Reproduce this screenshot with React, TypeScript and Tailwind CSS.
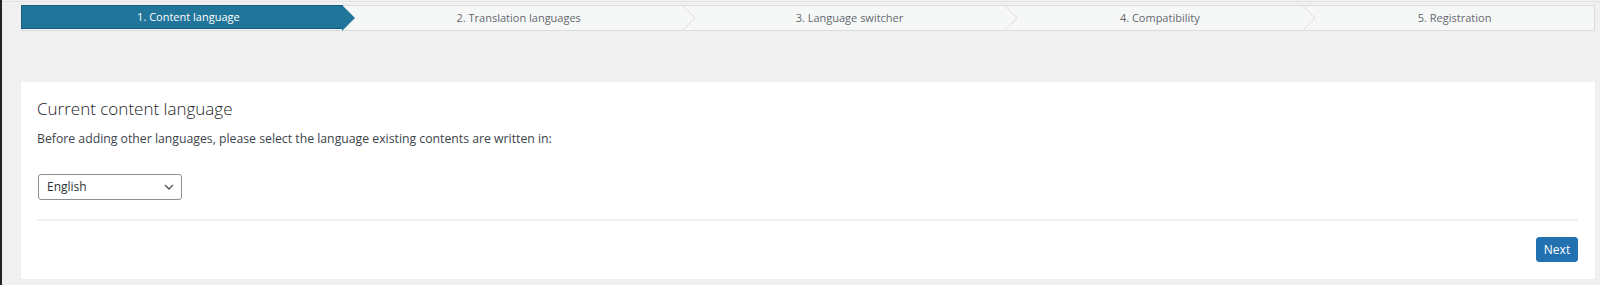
import React from "react";

const steps = [
  { label: "1. Content language", w: 322 },
  { label: "2. Translation languages", w: 339 },
  { label: "3. Language switcher", w: 323 },
  { label: "4. Compatibility", w: 298 },
  { label: "5. Registration", w: 292 },
];

export default function App() {
  return (
    <div
      className="w-[1600px] h-[285px] bg-[#f0f0f1] flex overflow-hidden"
      style={{ fontFamily: '"Open Sans", "Noto Sans", sans-serif' }}
    >
      <div className="w-[2px] h-full bg-[#1d2327] shrink-0" />
      <div className="flex-1 flex flex-col">
        <div className="h-[1px]" />
        <div className="h-[1px] bg-[#e4e4e4]" />
        <div className="pl-[19px] pt-[3px]">
          <div className="flex h-[26px] w-[1574px] bg-[#f6f7f7] border border-[#dcdcde] relative">
            {steps.map((s, i) => {
              const active = i === 0;
              return (
                <div
                  key={s.label}
                  className={
                    "relative h-full flex items-center justify-center pl-[13px] text-[11px] " +
                    (active ? "bg-[#21759b] text-white -my-px -ml-px border border-[#135e80]" : "text-[#646970]")
                  }
                  style={{ width: s.w }}
                >
                  <span className="relative z-20">{s.label}</span>
                  {i < steps.length - 1 && (
                    <svg
                      className="absolute top-[-1px] right-[-14px] z-10"
                      width="14"
                      height="26"
                      viewBox="0 0 14 26"
                    >
                      {active ? (
                        <polygon points="0,0 13,13 0,26" fill="#21759b" />
                      ) : (
                        <polyline points="0,0 13,13 0,26" fill="#f6f7f7" stroke="#dcdcde" strokeWidth="1" />
                      )}
                    </svg>
                  )}
                </div>
              );
            })}
          </div>
        </div>
        <div className="pl-[19px] pt-[51px]">
          <div className="w-[1574px] h-[197px] bg-white pl-[16px] pr-[17px] pt-[15px] flex flex-col">
            <h2 className="text-[17px] text-[#1d2327] leading-[24px] font-light">Current content language</h2>
            <p className="text-[12.25px] text-[#3c434a] mt-[9px] leading-[18px]">
              Before adding other languages, please select the language existing contents are written in:
            </p>
            <div className="mt-[26px] ml-[1px] w-[144px] h-[26px] border border-[#8c8f94] rounded-[3px] flex items-center justify-between pl-[8px] pr-[6px] text-[12px] text-[#2c3338]">
              <span>English</span>
              <svg width="12" height="12" viewBox="0 0 12 12">
                <polyline points="2,4 6,8 10,4" fill="none" stroke="#50575e" strokeWidth="1.4" />
              </svg>
            </div>
            <div className="mt-[19px] h-[2px] bg-[#f0f0f1]" />
            <div className="flex justify-end mt-[16px]">
              <button className="w-[42px] h-[25px] bg-[#2271b1] border border-[#2271b1] rounded-[3px] text-white text-[12px] flex items-center justify-center">
                Next
              </button>
            </div>
          </div>
        </div>
      </div>
    </div>
  );
}
